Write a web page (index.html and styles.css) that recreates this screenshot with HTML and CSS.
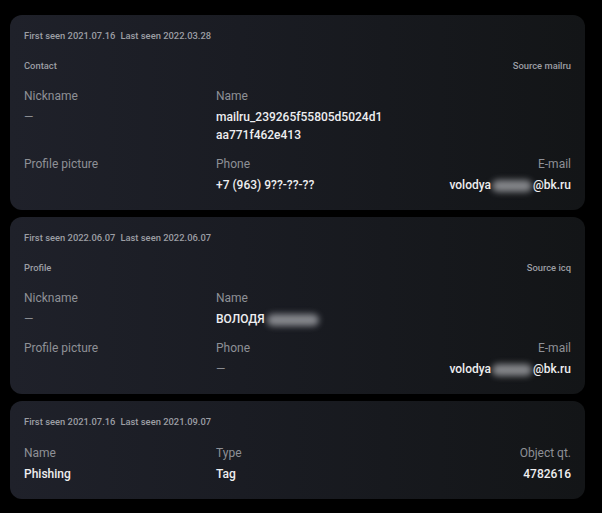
FILE: index.html
```html
<!DOCTYPE html>
<html lang="en">
<head>
<meta charset="utf-8">
<link rel="stylesheet" href="styles.css">
</head>
<body>
<div class="list">
  <section class="card">
    <div class="seen"><span>First seen 2021.07.16</span><span>Last seen 2022.03.28</span></div>
    <div class="kind"><span>Contact</span><span>Source mailru</span></div>
    <div class="grid">
      <div class="field"><div class="label">Nickname</div><div class="value dash">—</div></div>
      <div class="field"><div class="label">Name</div><div class="value">mailru_239265f55805d5024d1<br>aa771f462e413</div></div>
      <div class="field end"></div>
      <div class="field"><div class="label">Profile picture</div></div>
      <div class="field"><div class="label">Phone</div><div class="value">+7 (963) 9??-??-??</div></div>
      <div class="field end"><div class="label">E-mail</div><div class="value">volodya<span class="blur blur-mail"></span>@bk.ru</div></div>
    </div>
  </section>
  <section class="card">
    <div class="seen"><span>First seen 2022.06.07</span><span>Last seen 2022.06.07</span></div>
    <div class="kind"><span>Profile</span><span>Source icq</span></div>
    <div class="grid">
      <div class="field"><div class="label">Nickname</div><div class="value dash">—</div></div>
      <div class="field"><div class="label">Name</div><div class="value">ВОЛОДЯ<span class="blur blur-name"></span></div></div>
      <div class="field end"></div>
      <div class="field"><div class="label">Profile picture</div></div>
      <div class="field"><div class="label">Phone</div><div class="value dash">—</div></div>
      <div class="field end"><div class="label">E-mail</div><div class="value">volodya<span class="blur blur-mail"></span>@bk.ru</div></div>
    </div>
  </section>
  <section class="card">
    <div class="seen"><span>First seen 2021.07.16</span><span>Last seen 2021.09.07</span></div>
    <div class="grid grid-tight">
      <div class="field"><div class="label">Name</div><div class="value">Phishing</div></div>
      <div class="field"><div class="label">Type</div><div class="value">Tag</div></div>
      <div class="field end"><div class="label">Object qt.</div><div class="value">4782616</div></div>
    </div>
  </section>
</div>
</body>
</html>
```

FILE: styles.css
```css
* { box-sizing: border-box; }

html, body {
  margin: 0;
  background: #000;
}

body {
  font-family: Roboto, "Noto Sans", sans-serif;
  color: #ededef;
}

.list {
  display: flex;
  flex-direction: column;
  gap: 7px;
  padding: 15px 17px 0 10px;
}

.card {
  border-radius: 12px;
  background: linear-gradient(90deg, #1f212a 0%, #1a1c23 40%, #131517 100%);
  padding: 14px 14px 16px;
}

.seen {
  display: flex;
  gap: 5px;
  font-size: 9.4px;
  line-height: 14px;
  font-weight: 500;
  color: #9c9ea4;
}

.kind {
  display: flex;
  justify-content: space-between;
  margin-top: 16px;
  font-size: 9.4px;
  line-height: 14px;
  font-weight: 500;
  color: #9c9ea4;
}

.grid {
  display: grid;
  grid-template-columns: 192px 1fr auto;
  row-gap: 12px;
  margin-top: 15px;
}

.grid-tight {
  margin-top: 16px;
}

.field.end {
  text-align: right;
}

.label {
  font-size: 12px;
  line-height: 16px;
  color: #8e9096;
}

.value {
  margin-top: 4px;
  font-size: 12px;
  line-height: 18px;
  font-weight: 500;
  color: #eeeef0;
  white-space: nowrap;
}

.value.dash {
  color: #8a8c91;
  font-weight: 400;
}

.blur {
  display: inline-block;
  vertical-align: middle;
  height: 12px;
  border-radius: 6px;
  background: rgba(205, 207, 212, 0.6);
  filter: blur(3px);
}

.blur-mail {
  width: 40px;
  margin: 0 1px;
}

.blur-name {
  width: 52px;
  margin-left: 2px;
}
```
